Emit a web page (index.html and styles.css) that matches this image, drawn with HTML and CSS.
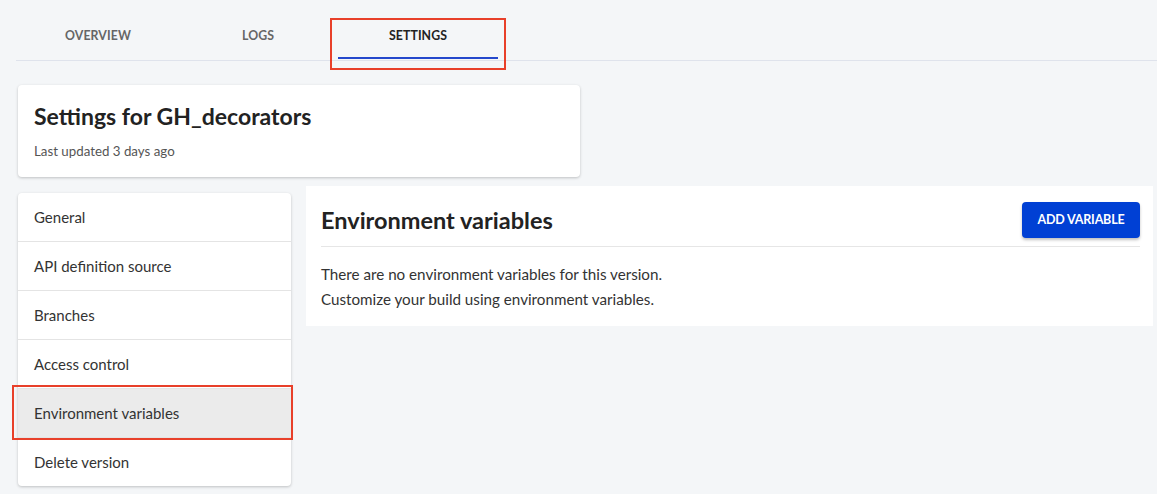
FILE: index.html
```html
<!DOCTYPE html>
<html>
<head>
<meta charset="utf-8">
<link rel="stylesheet" href="styles.css">
</head>
<body>
<div class="page">
  <nav class="tabs">
    <div class="tab">OVERVIEW</div>
    <div class="tab">LOGS</div>
    <div class="tab active">SETTINGS<span class="mark mark-tab"></span></div>
  </nav>
  <section class="header-card">
    <h1 class="title">Settings for GH_decorators</h1>
    <div class="sub">Last updated 3 days ago</div>
  </section>
  <div class="content">
    <ul class="menu">
      <li class="item">General</li>
      <li class="item">API definition source</li>
      <li class="item">Branches</li>
      <li class="item">Access control</li>
      <li class="item selected">Environment variables<span class="mark mark-item"></span></li>
      <li class="item">Delete version</li>
    </ul>
    <section class="panel">
      <div class="panel-head">
        <h2 class="panel-title">Environment variables</h2>
        <button class="btn">ADD VARIABLE</button>
      </div>
      <p class="line">There are no environment variables for this version.</p>
      <p class="line">Customize your build using environment variables.</p>
    </section>
  </div>
</div>
</body>
</html>
```
FILE: styles.css
```css
* { box-sizing: border-box; }
html, body { margin: 0; padding: 0; }
body {
  background: #f4f6f8;
  font-family: Lato, "Noto Sans", sans-serif;
  color: #222;
  width: 1157px;
  height: 494px;
  overflow: hidden;
}
.page { padding: 0 0 0 18px; }
.tabs {
  display: flex;
  height: 61px;
  border-bottom: 1px solid #dfe3ec;
  margin-left: -2px;
  padding-left: 2px;
}
.tab {
  position: relative;
  width: 160px;
  text-align: center;
  font-size: 12.3px;
  font-weight: 700;
  letter-spacing: 0.1px;
  color: #666;
  padding-top: 28px;
}
.tab.active { color: #222; }
.tab.active::after {
  content: "";
  position: absolute;
  left: 0; right: 0; bottom: 1px;
  height: 2px;
  background: #2448cc;
}
.mark {
  position: absolute;
  border: 2px solid #e8402a;
  pointer-events: none;
}
.mark-tab { left: -8px; right: -8px; top: 18px; bottom: -10px; }
.header-card {
  margin-top: 24px;
  width: 562px;
  height: 92px;
  background: #fff;
  border-radius: 4px;
  box-shadow: 0 1px 3px rgba(0,0,0,0.22);
  padding: 17px 16px 0;
}
.title {
  margin: 0;
  font-size: 23px;
  font-weight: 700;
  line-height: 28px;
  color: #222;
}
.sub {
  margin-top: 13px;
  font-size: 13.3px;
  color: #555;
}
.content {
  display: flex;
  align-items: flex-start;
  margin-top: 9px;
  gap: 15px;
}
.menu {
  list-style: none;
  margin: 7px 0 0;
  padding: 0;
  width: 273px;
  background: #fff;
  border-radius: 4px;
  box-shadow: 0 1px 3px rgba(0,0,0,0.22);
}
.item {
  position: relative;
  height: 49px;
  line-height: 48px;
  padding-left: 16px;
  font-size: 15px;
  color: #333;
  border-bottom: 1px solid #e4e4e4;
}
.item:last-child { border-bottom: 0; height: 48px; }
.item.selected { background: #ebebeb; }
.mark-item { left: -6px; right: -2px; top: -4px; bottom: -3px; }
.panel {
  width: 847px;
  height: 140px;
  background: #fff;
  padding: 16px 13px 0 15px;
}
.panel-head {
  display: flex;
  justify-content: space-between;
  align-items: center;
  height: 45px;
  border-bottom: 1px solid #e6e6e6;
  padding-bottom: 9px;
}
.panel-title {
  margin: 0;
  font-size: 23.5px;
  font-weight: 700;
  color: #222;
}
.btn {
  width: 118px;
  height: 36px;
  border: 0;
  border-radius: 4px;
  background: #0040d4;
  color: #fff;
  font-family: inherit;
  font-size: 12.5px;
  font-weight: 700;
  letter-spacing: -0.2px;
  box-shadow: 0 2px 3px rgba(0,0,0,0.25);
}
.line {
  margin: 0;
  font-size: 15.2px;
  line-height: 25px;
  color: #333;
}
.panel-head + .line { margin-top: 15px; }
```
